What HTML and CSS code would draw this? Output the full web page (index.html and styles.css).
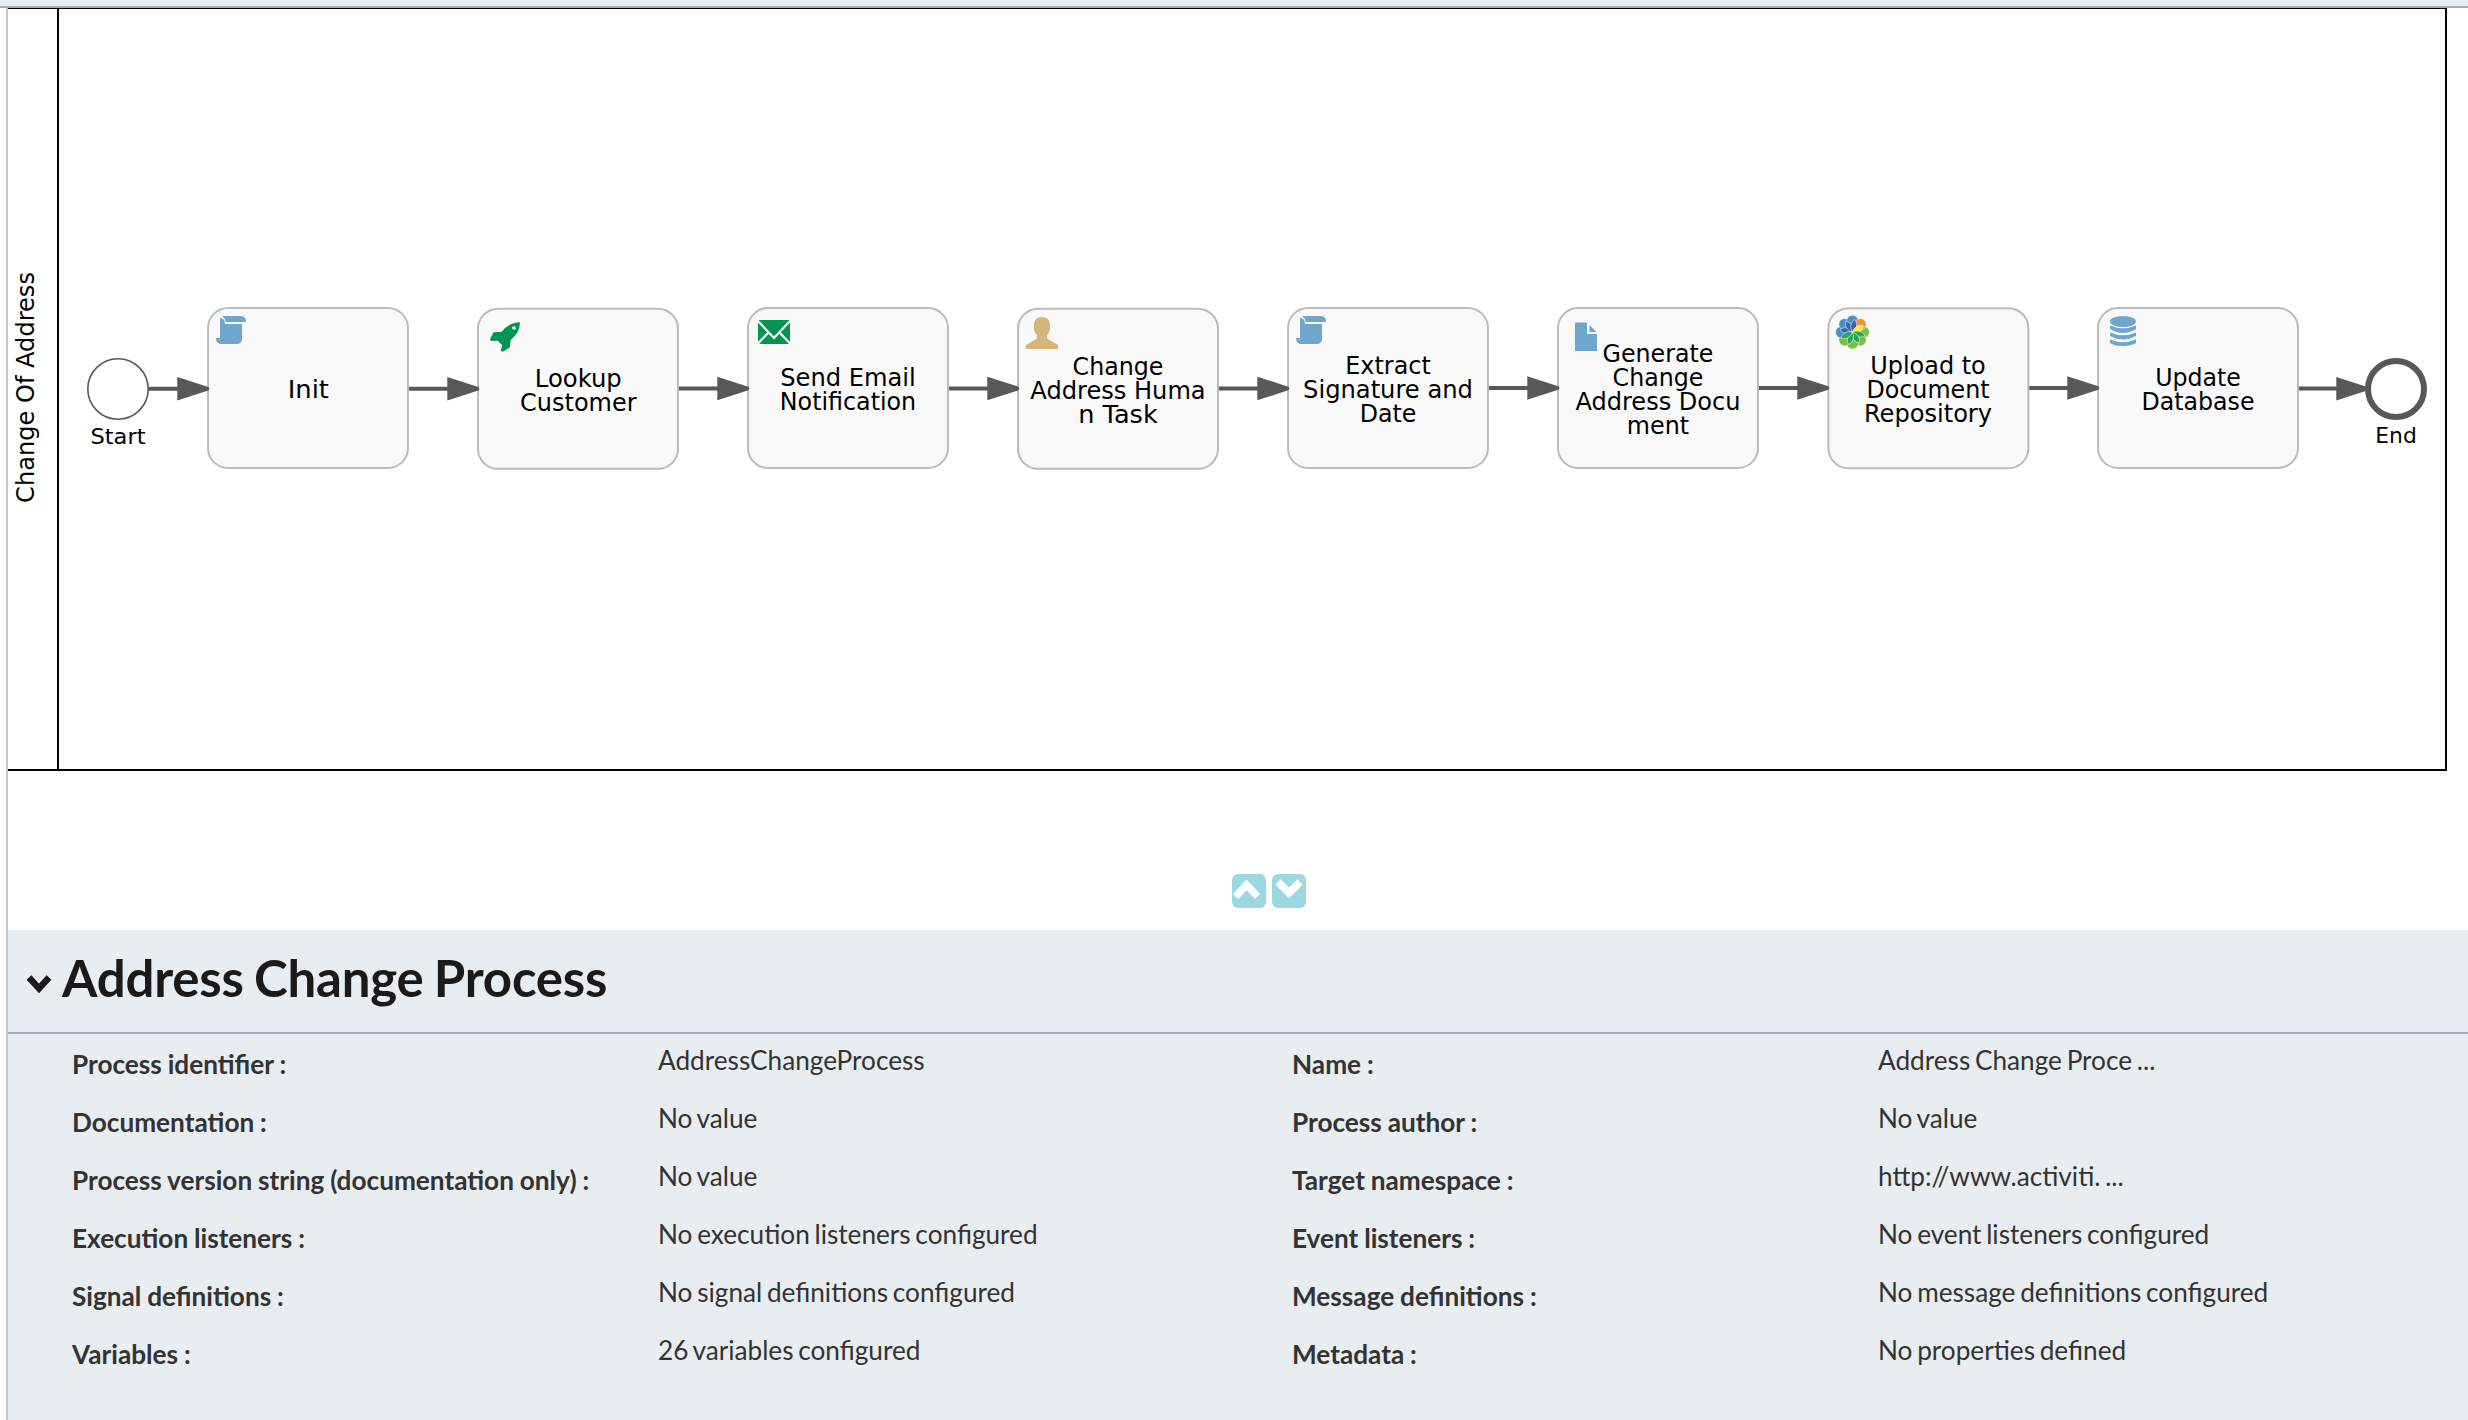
FILE: index.html
```html
<!DOCTYPE html>
<html lang="en">
<head>
<meta charset="utf-8">
<title>Address Change Process</title>
<link rel="stylesheet" href="styles.css">
</head>
<body>
<div class="topbar"></div>
<div class="editor">
<main class="canvas">
<svg class="diagram" viewBox="8 8 2460 842" width="2460" height="842">
  <defs>
    <rect id="task" class="task" x="-100" y="-80" width="200" height="160" rx="20"/>
    <path id="head" class="head" d="M-32-11.800L-1-1.800Q1 0-1 1.800L-32 11.800Z"/>
    <g id="script" class="blue"><path d="M4 2Q9 2 9 8H26V22Q26 28 20.500 28H6Q0 28 0 22H4Z"/><path d="M6.500 0H25Q30 0 30 6H9.500Q9.500 2 6.500 0.800Z"/></g>
    <path id="lobe" d="M0 0L-5.200-8.500A5.800 5.800 0 1 1 5.200-8.500Z"/>
    <path id="leaf" d="M0 0C-3.800-4-4-9.500-.5-12.800C3.500-9.500 3.800-4 0 0Z"/>
  </defs>
  <path class="pool" d="M8 8H2446V770H8M58 8V770"/>
  <text class="label" transform="translate(34 387.500) rotate(-90)" textLength="230.900" lengthAdjust="spacingAndGlyphs">Change Of Address</text>

  <g class="flow">
    <path d="M148 388.700H180M407 388.700H450M678 388.500H720M948 388.500H990M1218 388.500H1260M1488 388H1530M1758 388H1800M2029 388H2070M2299 388.500H2340"/>
  </g>
  <circle class="start" cx="118" cy="389" r="30.200"/>
  <circle class="end" cx="2396" cy="389" r="28"/>

  <use href="#task" x="308" y="388"/>
  <use href="#task" x="578" y="388.800"/>
  <use href="#task" x="848" y="388"/>
  <use href="#task" x="1118" y="388.800"/>
  <use href="#task" x="1388" y="388"/>
  <use href="#task" x="1658" y="388"/>
  <use href="#task" x="1928.400" y="388.200"/>
  <use href="#task" x="2198" y="388"/>

  <use href="#head" x="209.300" y="388.700"/>
  <use href="#head" x="479.300" y="388.700"/>
  <use href="#head" x="749.300" y="388.500"/>
  <use href="#head" x="1019.300" y="388.500"/>
  <use href="#head" x="1289.300" y="388.500"/>
  <use href="#head" x="1559.300" y="388"/>
  <use href="#head" x="1829.300" y="388"/>
  <use href="#head" x="2099.300" y="388"/>
  <use href="#head" x="2368.300" y="388.800"/>

  <use href="#script" x="216" y="316"/>
  <g transform="translate(460 290) scale(.3333)">
    <path class="green" d="M180 97Q180 128 152 150L149 173L128 185L122 182L127 166L113 152L93 153L90 147L101 127L125 125Q148 97 180 97Z"/>
    <circle class="hole" cx="162" cy="114" r="5.500"/>
  </g>
  <g transform="translate(758 320)">
    <path class="green" d="M0 0H32V24H0Z"/>
    <path class="fold" d="M-.5 .5L16 18L32.500 .5M-.5 24L10.500 12.500M32.500 24L21.500 12.500"/>
  </g>
  <path class="tan" transform="translate(1026 317)" d="M16 0C21 0 24 3 24 8V12C24 15 21 18 21 18V21.500L32 28V32H0V28L11 21.500V18C11 18 8 15 8 12V8C8 3 11 0 16 0Z"/>
  <use href="#script" x="1296" y="316"/>
  <g class="blue" transform="translate(1575 322.500)"><path d="M0 0H12V11.500H22V28.500H0Z"/><path d="M14.500 2.500V9.500H21.500Z"/></g>
  <g class="rosette" transform="translate(1852.500 332.200)">
    <g class="lobe-green"><use href="#lobe" transform="rotate(90)"/><use href="#lobe" transform="rotate(135)"/><use href="#lobe" transform="rotate(180)"/><use href="#lobe" transform="rotate(225)"/></g>
    <g class="lobe-blue"><use href="#lobe" transform="rotate(270)"/><use href="#lobe" transform="rotate(315)"/><use href="#lobe"/></g>
    <use class="lobe-orange" href="#lobe" transform="rotate(45)"/>
    <g class="leaf-blue"><use href="#leaf" transform="rotate(-75)"/><use href="#leaf" transform="rotate(-30)"/><use href="#leaf" transform="rotate(12)"/></g>
    <use class="leaf-yellow" href="#leaf" transform="rotate(62)"/>
    <g class="leaf-green"><use href="#leaf" transform="rotate(107)"/><use href="#leaf" transform="rotate(150)"/><use href="#leaf" transform="rotate(200)"/><use href="#leaf" transform="rotate(245)"/></g>
  </g>
  <g class="blue" transform="translate(2110 316)">
    <ellipse cx="13" cy="5.500" rx="13" ry="5.500"/>
    <path d="M0 9.500Q13 15 26 9.500V13Q13 21 0 13ZM0 16.500Q13 22 26 16.500V20Q13 27 0 20ZM0 23.500Q13 29 26 23.500V27Q22 30 13 30Q4 30 0 27Z"/>
  </g>

  <g class="label">
    <text x="308.300" y="397.800" textLength="41.300" lengthAdjust="spacingAndGlyphs">Init</text>
    <text x="578.300" y="387" textLength="86.900" lengthAdjust="spacingAndGlyphs">Lookup</text>
    <text x="578.300" y="411" textLength="116.400" lengthAdjust="spacingAndGlyphs">Customer</text>
    <text x="848" y="386" textLength="135.400" lengthAdjust="spacingAndGlyphs">Send Email</text>
    <text x="848" y="410" textLength="136.300" lengthAdjust="spacingAndGlyphs">Notification</text>
    <text x="1118" y="375" textLength="90.800" lengthAdjust="spacingAndGlyphs">Change</text>
    <text x="1118" y="399" textLength="175.300" lengthAdjust="spacingAndGlyphs">Address Huma</text>
    <text x="1118" y="423" textLength="79.500" lengthAdjust="spacingAndGlyphs">n Task</text>
    <text x="1388" y="374" textLength="85.500" lengthAdjust="spacingAndGlyphs">Extract</text>
    <text x="1388" y="398" textLength="169.800" lengthAdjust="spacingAndGlyphs">Signature and</text>
    <text x="1388" y="422" textLength="56.700" lengthAdjust="spacingAndGlyphs">Date</text>
    <text x="1658" y="362" textLength="110.800" lengthAdjust="spacingAndGlyphs">Generate</text>
    <text x="1658" y="386" textLength="90.800" lengthAdjust="spacingAndGlyphs">Change</text>
    <text x="1658" y="410" textLength="165.100" lengthAdjust="spacingAndGlyphs">Address Docu</text>
    <text x="1658" y="434" textLength="62.300" lengthAdjust="spacingAndGlyphs">ment</text>
    <text x="1928" y="374" textLength="115.500" lengthAdjust="spacingAndGlyphs">Upload to</text>
    <text x="1928" y="398" textLength="123.100" lengthAdjust="spacingAndGlyphs">Document</text>
    <text x="1928" y="422" textLength="128.100" lengthAdjust="spacingAndGlyphs">Repository</text>
    <text x="2198" y="386" textLength="85.700" lengthAdjust="spacingAndGlyphs">Update</text>
    <text x="2198" y="410" textLength="113" lengthAdjust="spacingAndGlyphs">Database</text>
    <text class="event" x="118" y="444" textLength="55" lengthAdjust="spacingAndGlyphs">Start</text>
    <text class="event" x="2396" y="442.700" textLength="41.500" lengthAdjust="spacingAndGlyphs">End</text>
  </g>
</svg>
</main>
<div class="toggles">
  <svg class="toggle" viewBox="0 0 34 34"><path d="M3.500 22.500L14.500 11L25.500 22.500"/></svg>
  <svg class="toggle" viewBox="0 0 34 34"><path d="M6 8L17 19L28 8"/></svg>
</div>
<section class="panel">
  <header class="panel-head">
    <svg class="chevron" viewBox="0 0 26 20" width="26" height="20"><path d="M3 3.500L13 14.500L23 3.500"/></svg>
    <h1>Address Change Process</h1>
  </header>
  <dl class="props">
    <dt>Process identifier :</dt><dd>AddressChangeProcess</dd><dt>Name :</dt><dd>Address Change Proce ...</dd>
    <dt>Documentation :</dt><dd>No value</dd><dt>Process author :</dt><dd>No value</dd>
    <dt>Process version string (documentation only) :</dt><dd>No value</dd><dt>Target namespace :</dt><dd>http://www.activiti. ...</dd>
    <dt>Execution listeners :</dt><dd>No execution listeners configured</dd><dt>Event listeners :</dt><dd>No event listeners configured</dd>
    <dt>Signal definitions :</dt><dd>No signal definitions configured</dd><dt>Message definitions :</dt><dd>No message definitions configured</dd>
    <dt>Variables :</dt><dd>26 variables configured</dd><dt>Metadata :</dt><dd>No properties defined</dd>
  </dl>
</section>
</div>
</body>
</html>
```
FILE: styles.css
```css
* { box-sizing: border-box; }
body { margin: 0; height: 1420px; overflow: hidden; background: #fff; font-family: Lato, sans-serif; color: #333; }
.topbar { height: 8px; background: #e8edf1; border-bottom: 2px solid #a2acbb; }
.editor { display: flex; flex-direction: column; height: 1412px; margin-left: 6px; border-left: 2px solid #c6cacd; }
.canvas { height: 842px; }
.diagram { display: block; }
.pool { fill: none; stroke: #000; stroke-width: 2; }
.task { fill: #f9f9f9; stroke: #bbb; stroke-width: 2; }
.flow { fill: none; stroke: #585858; stroke-width: 4; }
.head { fill: #585858; }
.start { fill: #fff; stroke: #585858; stroke-width: 1.6; }
.end { fill: #fff; stroke: #585858; stroke-width: 6; }
.label { font-family: "DejaVu Sans", sans-serif; font-size: 24px; fill: #000; text-anchor: middle; }
.event { font-size: 22px; }
.blue { fill: #6ea6ce; }
.green { fill: #009650; }
.tan { fill: #d3b678; }
.hole { fill: #f9f9f9; }
.fold { fill: none; stroke: #f9f9f9; stroke-width: 2.2; }
.rosette { stroke: #f9f9f9; stroke-width: .5; }
.lobe-blue { fill: #4591c4; }
.lobe-orange { fill: #f7922f; }
.lobe-green { fill: #7ac143; }
.leaf-blue { fill: #3d62ab; }
.leaf-yellow { fill: #fdee30; }
.leaf-green { fill: #2aa84a; }
.toggles { display: flex; gap: 6px; height: 80px; padding: 24px 0 0 1224px; }
.toggle { width: 34px; height: 34px; border-radius: 6px; background: #9bd8e2; fill: none; stroke: #fff; stroke-width: 7.5; }
.panel { flex: 1; background: #e8edf1; }
.panel-head { display: flex; align-items: center; height: 104px; padding-left: 18px; gap: 10px; border-bottom: 2px solid #a2acbb; }
.chevron { margin-top: 6px; fill: none; stroke: #1a1a1a; stroke-width: 6.5; }
h1 { margin: 0 0 6px; font-size: 51px; line-height: 60px; font-weight: 700; letter-spacing: -.2px; word-spacing: -2px; color: #1a1a1a; }
.props { display: grid; grid-template-columns: 586px 634px 586px 1fr; grid-auto-rows: 58px; margin: 0; padding-left: 64px; font-size: 26.2px; line-height: 32px; white-space: nowrap; }
dt { padding-top: 14px; font-weight: 700; word-spacing: -.5px; }
dd { margin: 0; padding-top: 10px; word-spacing: -2px; }
```
